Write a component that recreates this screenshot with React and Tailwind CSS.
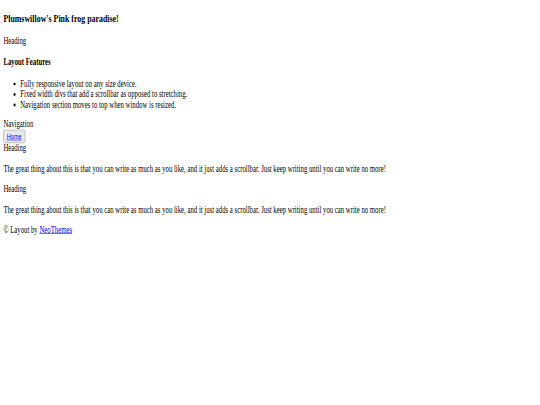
export default function App() {
  return (
    <div className="w-[540px] h-[405px] overflow-hidden bg-white">
      <div className="w-[1280px] h-[720px] origin-top-left scale-x-[0.421875] scale-y-[0.582] font-['Liberation_Serif',serif] text-[16px] leading-[normal] text-black">
        <div className="px-2 py-px">
          <h3 className="text-[18.72px] font-bold mt-[18.72px] mb-[20.5px]">Plumswillow's Pink frog paradise!</h3>
          <div>Heading</div>
          <h4 className="text-[16px] font-bold mt-[18px] mb-[18.5px]">Layout Features</h4>
          <ul className="list-disc pl-10 my-4">
            <li>Fully responsive layout on any size device.</li>
            <li>Fixed width divs that add a scrollbar as opposed to stretching.</li>
            <li>Navigation section moves to top when window is resized.</li>
          </ul>
          <div>Navigation</div>
          <div className="flex">
            <a href="#" className="border border-[#8f8f9d] bg-[#e9e9ed] rounded-[3px] px-[7px] text-[#0000ee] underline text-[13.33px] leading-[21px] font-['Liberation_Sans',sans-serif]">Home</a>
          </div>
          <div>Heading</div>
          <p className="mt-[18px] mb-4">The great thing about this is that you can write as much as you like, and it just adds a scrollbar. Just keep writing until you can write no more!</p>
          <div>Heading</div>
          <p className="mt-[18px] mb-4">The great thing about this is that you can write as much as you like, and it just adds a scrollbar. Just keep writing until you can write no more!</p>
          <div>© Layout by <a href="#" className="text-[#0000ee] underline">NeoThemes</a></div>
        </div>
      </div>
    </div>
  );
}
